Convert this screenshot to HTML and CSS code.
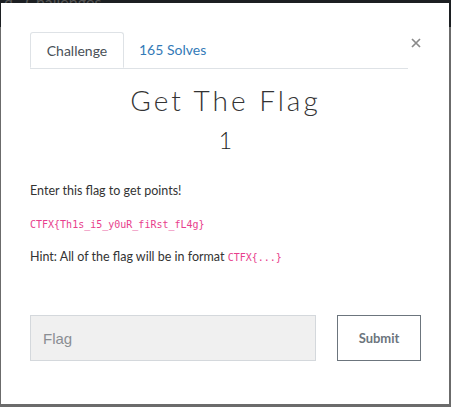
FILE: index.html
```html
<!DOCTYPE html>
<html>
<head>
<meta charset="utf-8">
<link rel="stylesheet" href="styles.css">
</head>
<body>
<div class="topbar"><span class="crumb">d &nbsp; Challenges</span></div>
<div class="modal">
  <div class="head">
    <div class="tabs">
      <div class="tab active">Challenge</div>
      <div class="tab link">165 Solves</div>
    </div>
    <div class="close" aria-label="Close">
      <svg width="10" height="10" viewBox="0 0 10 10"><path d="M1 1 L9 9 M9 1 L1 9" stroke="#8a8a8a" stroke-width="1.7" fill="none"/></svg>
    </div>
  </div>
  <h1 class="title">Get The Flag</h1>
  <div class="value">1</div>
  <p class="desc first">Enter this flag to get points!</p>
  <p class="desc"><code>CTFX{Th1s_i5_y0uR_fiRst_fL4g}</code></p>
  <p class="desc">Hint: All of the flag will be in format <code>CTFX{...}</code></p>
  <form class="form">
    <input class="flag" type="text" placeholder="Flag">
    <button class="submit" type="button">Submit</button>
  </form>
</div>
</body>
</html>
```
FILE: styles.css
```css
html, body {
  margin: 0;
  padding: 0;
  width: 451px;
  height: 407px;
  overflow: hidden;
  background: #6b6b6b;
  font-family: "Lato", "Liberation Sans", sans-serif;
}
.topbar {
  height: 27px;
  background: #1c1f22;
  color: #555;
  font-size: 16px;
  overflow: hidden;
}
.crumb {
  display: block;
  margin-top: -8px;
  padding-left: 4px;
}
.modal {
  position: absolute;
  left: 1px;
  top: 3px;
  width: 448px;
  height: 401px;
  background: #fff;
  box-sizing: border-box;
  padding: 29px 28px 0 29px;
}
.head {
  display: flex;
  align-items: flex-start;
}
.tabs {
  display: flex;
  flex: 0 0 378px;
  border-bottom: 1px solid #dee2e6;
  height: 36px;
}
.tab {
  font-size: 14px;
  padding: 0 15px;
  line-height: 35px;
  height: 36px;
  box-sizing: border-box;
}
.tab.active {
  width: 94px;
  color: #495057;
  border: 1px solid #dee2e6;
  border-bottom-color: #fff;
  border-radius: 3px 3px 0 0;
  background: #fff;
  text-align: center;
  padding: 0;
}
.tab.link {
  color: #337ab7;
}
.close {
  margin-left: 3px;
  margin-top: 6px;
  width: 10px;
  height: 10px;
  line-height: 0;
}
.title {
  margin: 14px 0 0 0;
  text-align: center;
  font-weight: 300;
  font-size: 28px;
  line-height: 34px;
  color: #333;
  letter-spacing: 3px;
}
.value {
  text-align: center;
  font-size: 23px;
  line-height: 30px;
  margin-top: 8px;
  color: #222;
  font-weight: 300;
}
.desc {
  margin: 0;
  font-size: 12.5px;
  color: #333;
  line-height: 20px;
}
.desc.first { margin-top: 26px; }
.desc + .desc { margin-top: 13px; }
code {
  font-family: "DejaVu Sans Mono", monospace;
  font-size: 10px;
  line-height: 1;
  color: #e83e8c;
}
.form {
  display: flex;
  margin-top: 48px;
  gap: 21px;
}
.flag {
  width: 286px;
  height: 46px;
  box-sizing: border-box;
  border: 1px solid #d4d8dc;
  background: #f0f0f0;
  padding: 0 12px;
  font-family: "Liberation Sans", sans-serif;
  font-size: 15px;
  outline: none;
}
.flag::placeholder {
  color: #8a8e93;
}
.submit {
  width: 84px;
  height: 46px;
  box-sizing: border-box;
  border: 1px solid #6c757d;
  background: #fff;
  color: #6c757d;
  font-family: "Lato", sans-serif;
  font-weight: 700;
  font-size: 13px;
  border-radius: 0;
}
```
